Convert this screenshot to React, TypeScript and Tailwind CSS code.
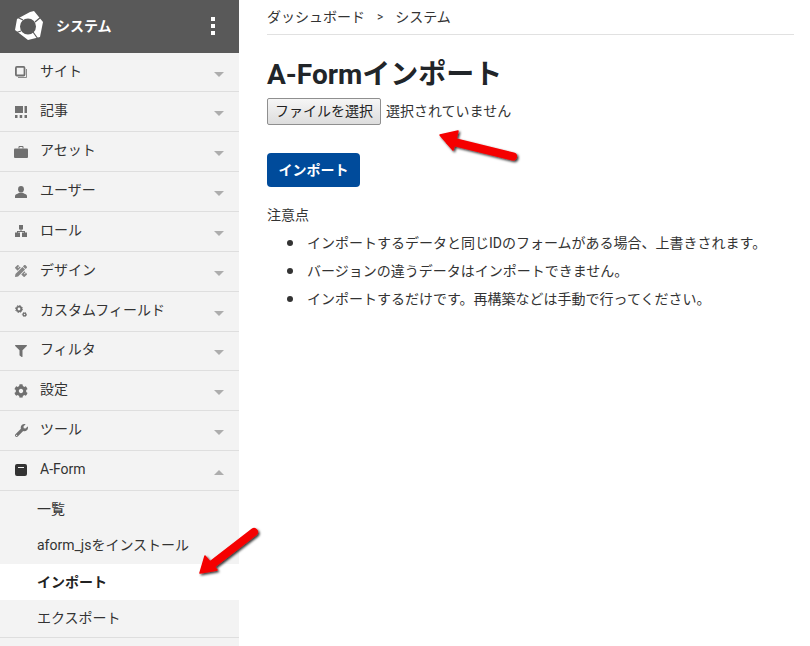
import { FaFilter, FaCog, FaWrench, FaPencilRuler } from "react-icons/fa";

const FONT = "font-['Roboto','Noto_Sans_CJK_JP',sans-serif]";

const ITEMS = [
  { label: "サイト", icon: <SiteIcon /> },
  { label: "記事", icon: <ArticleIcon /> },
  { label: "アセット", icon: <CaseIcon /> },
  { label: "ユーザー", icon: <UserIcon /> },
  { label: "ロール", icon: <RoleIcon /> },
  { label: "デザイン", icon: <FaPencilRuler size={12} className="text-[#858585]" /> },
  { label: "カスタムフィールド", icon: <CogsIcon /> },
  { label: "フィルタ", icon: <FaFilter size={12} /> },
  { label: "設定", icon: <FaCog size={14} /> },
  { label: "ツール", icon: <FaWrench size={13} /> },
];

const SUB = [
  { label: "一覧" },
  { label: "aform_jsをインストール" },
  { label: "インポート", active: true },
  { label: "エクスポート" },
];

const NOTES = [
  "インポートするデータと同じIDのフォームがある場合、上書きされます。",
  "バージョンの違うデータはインポートできません。",
  "インポートするだけです。再構築などは手動で行ってください。",
];

function SiteIcon() {
  return (
    <svg width="12" height="12" viewBox="0 0 12 12" fill="none" stroke="currentColor">
      <rect x="0.9" y="0.9" width="8.6" height="8.6" rx="1" strokeWidth="1.8" />
      <path d="M11.5 3 V11.5 H3" strokeWidth="1" opacity="0.8" />
    </svg>
  );
}

function ArticleIcon() {
  return (
    <svg width="12" height="12" viewBox="0 0 12 12" fill="currentColor">
      <rect x="0" y="0" width="8" height="7" />
      <rect x="9.5" y="0" width="2.5" height="7" />
      <rect x="0" y="9" width="2.5" height="3" />
      <rect x="4.7" y="9" width="2.5" height="3" />
      <rect x="9.5" y="9" width="2.5" height="3" />
    </svg>
  );
}

function CaseIcon() {
  return (
    <svg width="14" height="12" viewBox="0 0 14 12" fill="currentColor">
      <path d="M4.5 2.5 V1 Q4.5 0 5.5 0 H8.5 Q9.5 0 9.5 1 V2.5 H8.5 V1 H5.5 V2.5 Z" />
      <rect x="0" y="2.5" width="14" height="9.5" rx="1" />
    </svg>
  );
}

function UserIcon() {
  return (
    <svg width="12" height="12" viewBox="0 0 12 12" fill="currentColor">
      <ellipse cx="6" cy="3.3" rx="2.9" ry="3.3" />
      <path d="M0 12 V9.8 Q0.3 8.3 2.5 7.8 L4.3 6.8 H7.7 L9.5 7.8 Q11.7 8.3 12 9.8 V12 Z" />
    </svg>
  );
}

function RoleIcon() {
  return (
    <svg width="12" height="12" viewBox="0 0 12 12" fill="currentColor">
      <rect x="4" y="0" width="4" height="4.5" />
      <path d="M5.5 4 H6.5 V6 H10 V8 H9 V7 H3 V8 H2 V6 H5.5 Z" />
      <rect x="0" y="7.5" width="5" height="4.5" />
      <rect x="7" y="7.5" width="5" height="4.5" />
    </svg>
  );
}

function CogsIcon() {
  return (
    <svg width="12" height="12" viewBox="0 0 12 12" fill="none" stroke="currentColor">
      <circle cx="4" cy="4" r="2.3" strokeWidth="1.8" />
      <circle cx="4" cy="4" r="3.5" strokeWidth="1" strokeDasharray="1.4 1.35" />
      <circle cx="9.5" cy="9.5" r="1.4" strokeWidth="1.3" />
      <circle cx="9.5" cy="9.5" r="2.2" strokeWidth="0.8" strokeDasharray="1 1" />
    </svg>
  );
}

function BookIcon() {
  return (
    <svg width="12" height="12" viewBox="0 0 12 12" fill="currentColor">
      <path fillRule="evenodd" d="M2 0 H10 Q12 0 12 2 V10 Q12 12 10 12 H2 Q0 12 0 10 V2 Q0 0 2 0 Z M3 3 V4 H9 V3 Z" />
    </svg>
  );
}

function Logo() {
  return (
    <svg width="30" height="30" viewBox="0 0 30 30">
      <path
        fill="white"
        fillRule="evenodd"
        d="M16 1 L20 0 L29 11 L26 26 L14 29 L1 19 L3 8 Z M14 7.5 A8 8 0 1 0 14 23.5 A8 8 0 1 0 14 7.5 Z"
      />
      <g stroke="#595959" strokeWidth="1.2">
        <line x1="9" y1="9" x2="3" y2="6" />
        <line x1="21" y1="11" x2="27" y2="6" />
        <line x1="19" y1="21" x2="24" y2="28" />
        <line x1="7" y1="20" x2="1" y2="22" />
      </g>
    </svg>
  );
}

function Caret({ up }: { up?: boolean }) {
  return up ? (
    <span className="mt-[4px] h-0 w-0 border-x-[5px] border-b-[5px] border-x-transparent border-b-[#adadad]" />
  ) : (
    <span className="mt-[4px] h-0 w-0 border-x-[5px] border-t-[5px] border-x-transparent border-t-[#adadad]" />
  );
}

function Row({ label, icon, up, dark }: { label: string; icon: React.ReactNode; up?: boolean; dark?: boolean }) {
  return (
    <div className="flex h-[39.85px] items-center border-b border-[#dedede] pr-[15px] pl-[14px]">
      <span className={`flex w-[14px] justify-center ${dark ? "text-[#333]" : "text-[#707070]"}`}>{icon}</span>
      <span className="ml-[12px] flex-1 -translate-y-[0.75px] text-[14px] text-[#333]">{label}</span>
      <Caret up={up} />
    </div>
  );
}

export default function App() {
  return (
    <div className={`relative flex h-[646px] w-[810px] overflow-hidden bg-white text-[#333] ${FONT}`}>
      <aside className="h-full w-[239px] shrink-0 bg-[#f3f3f3]">
        <div className="flex h-[52.6px] items-center bg-[#595959] pr-[24px] pl-[14px] text-white">
          <Logo />
          <span className="ml-[12px] flex-1 text-[14px] font-bold">システム</span>
          <span className="flex flex-col gap-[3px]">
            <i className="h-[4px] w-[4px] bg-white" />
            <i className="h-[4px] w-[4px] bg-white" />
            <i className="h-[4px] w-[4px] bg-white" />
          </span>
        </div>
        {ITEMS.map((it) => (
          <Row key={it.label} label={it.label} icon={it.icon} />
        ))}
        <Row label="A-Form" icon={<BookIcon />} up dark />
        <div className="border-b border-[#dedede]">
          {SUB.map((s) => (
            <div
              key={s.label}
              className={`flex h-[36.5px] items-center pl-[37px] text-[14px] ${s.active ? "bg-white font-bold text-[#222]" : "text-[#333]"}`}
            >
              {s.label}
            </div>
          ))}
        </div>
      </aside>

      <main className="flex-1 pr-[16px] pl-[28px]">
        <div className="flex h-[35px] items-center border-b border-[#e1e1e1] text-[14px] text-[#333]">
          <span>ダッシュボード</span>
          <span className="mr-[12px] ml-[12px] text-[12px]">&gt;</span>
          <span>システム</span>
        </div>
        <h1 className="mt-[21px] text-[28px] leading-[38px] font-bold text-[#212529]">A-Formインポート</h1>
        <div className="mt-[4px] flex items-center text-[14px]">
          <span className="flex h-[27px] w-[114px] items-center justify-center rounded-[2px] border border-[#8f8f8f] bg-linear-to-b from-[#f6f6f6] to-[#dddddd] text-[#222]">
            ファイルを選択
          </span>
          <span className="ml-[5px]">選択されていません</span>
        </div>
        <button className="mt-[28px] flex h-[34px] w-[93px] items-center justify-center rounded-[4px] bg-[#004b9b] text-[14px] font-bold text-white">
          インポート
        </button>
        <p className="mt-[18px] text-[14px] leading-[20px]">注意点</p>
        <ul className="mt-[4px] pl-[40px] text-[14px]">
          {NOTES.map((n) => (
            <li key={n} className="flex h-[28px] items-center leading-[28px]">
              <span className="mr-[14px] -ml-[20px] h-[6px] w-[6px] rounded-full bg-[#333]" />
              {n}
            </li>
          ))}
        </ul>
      </main>

      {/* annotation arrows */}
      <svg className="pointer-events-none absolute top-0 left-0" width="810" height="646">
        <defs>
          <filter id="s" x="-30%" y="-30%" width="160%" height="160%">
            <feDropShadow dx="1.5" dy="1.5" stdDeviation="1.2" floodColor="#000" floodOpacity="0.8" />
          </filter>
        </defs>
        <g filter="url(#s)" fill="#f50000" stroke="#f50000">
          <line x1="513" y1="156.5" x2="450" y2="141" strokeWidth="8" strokeLinecap="round" />
          <polygon points="440,135 458,131 453,150" strokeWidth="1.5" strokeLinejoin="round" />
          <line x1="254" y1="532" x2="210" y2="566" strokeWidth="8" strokeLinecap="round" />
          <polygon points="200,573 205,556 217,570" strokeWidth="1.5" strokeLinejoin="round" />
        </g>
      </svg>
    </div>
  );
}
